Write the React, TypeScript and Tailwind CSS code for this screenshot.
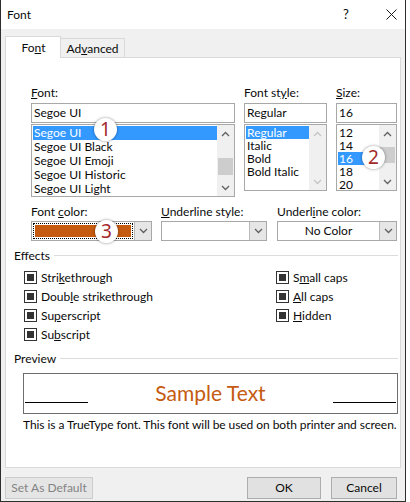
import React from "react";

const ORANGE = "#c55a11";

function Chev({ up, light }: { up?: boolean; light?: boolean }) {
  return (
    <svg width="9" height="6" viewBox="0 0 9 6" className="block">
      <polyline
        points={up ? "1,5 4.5,1.5 8,5" : "1,1 4.5,4.5 8,1"}
        fill="none"
        stroke={light ? "#c4c4c4" : "#606060"}
        strokeWidth="1.3"
      />
    </svg>
  );
}

function Scrollbar({ before, thumb, light }: { before: number; thumb: number; light?: boolean }) {
  return (
    <div className="flex h-full w-[17px] flex-col bg-[#f0f0f0]">
      <div className="flex h-[17px] items-center justify-center">
        <Chev up light={light} />
      </div>
      <div style={{ height: before }} />
      {thumb > 0 && <div className="mx-[1px] bg-[#cdcdcd]" style={{ height: thumb }} />}
      <div className="flex-1" />
      <div className="flex h-[17px] items-center justify-center">
        <Chev light={light} />
      </div>
    </div>
  );
}

function Badge({ n, className }: { n: string; className: string }) {
  return (
    <div
      className={`absolute flex h-[23px] w-[23px] items-center justify-center rounded-full bg-white font-['Noto_Sans',sans-serif] text-[19px] leading-none text-[#a3282b] shadow-[0_0_3px_rgba(0,0,0,0.45)] ${className}`}
    >
      <span className="-mt-[1px]">{n}</span>
    </div>
  );
}

function Label({ children }: { children: React.ReactNode }) {
  return <div className="h-[15px] leading-[15px] whitespace-nowrap">{children}</div>;
}

function DropArrow() {
  return (
    <div className="flex h-full w-[17px] items-center justify-center border-l border-[#b9b9b9] bg-[#e6e6e6]">
      <Chev />
    </div>
  );
}

function Check({ children }: { children: React.ReactNode }) {
  return (
    <div className="flex h-[19px] items-center whitespace-nowrap">
      <div className="flex h-[13px] w-[13px] items-center justify-center border border-[#333333] bg-white">
        <div className="h-[7px] w-[7px] bg-[#333333]" />
      </div>
      <span className="ml-[4px] leading-[15px]">{children}</span>
    </div>
  );
}

function SectionHead({ title }: { title: string }) {
  return (
    <div className="flex h-[15px] items-center pl-[8px] pr-[2px]">
      <span className="leading-[15px]">{title}</span>
      <div className="ml-[4px] h-px flex-1 bg-[#dcdcdc]" />
    </div>
  );
}

export default function App() {
  const fonts = ["Segoe UI", "Segoe UI Black", "Segoe UI Emoji", "Segoe UI Historic", "Segoe UI Light"];
  const styles = ["Regular", "Italic", "Bold", "Bold Italic"];
  const sizes = ["12", "14", "16", "18", "20"];

  return (
    <div className="h-[502px] w-[410px] bg-white font-['Segoe_UI','Lato',sans-serif] text-[12px] text-[#0a0a0a]">
      <div className="flex h-[502px] w-[406px] flex-col border-x border-b border-[#2e2e2e]">
        {/* title bar */}
        <div className="flex h-[29px] items-center bg-white pl-[6px]">
          <span className="text-[12px]">Font</span>
          <span className="ml-auto w-[12px] text-center text-[13px]">?</span>
          <svg width="11" height="11" viewBox="0 0 11 11" className="ml-[34px] mr-[8px]">
            <path d="M0.5 0.5 L10.5 10.5 M10.5 0.5 L0.5 10.5" stroke="#1a1a1a" strokeWidth="1" />
          </svg>
        </div>

        <div className="flex flex-1 flex-col bg-[#f0f0f0] px-[4px]">
          {/* tabs */}
          <div className="mt-[7px] flex h-[21px] items-end">
            <div className="relative z-10 -mb-px flex h-[22px] w-[56px] items-start justify-center border border-b-0 border-[#d9d9d9] bg-white pt-[3px] pl-[1px]">
              <span className="leading-[15px]">
                Fo<u>n</u>t
              </span>
            </div>
            <div className="flex h-[19px] w-[64px] items-center justify-center border border-l-0 border-b-0 border-[#d9d9d9] bg-[#f0f0f0]">
              <span className="leading-[15px]">
                Ad<u>v</u>anced
              </span>
            </div>
          </div>

          {/* panel */}
          <div className="h-[411px] border border-[#d9d9d9] bg-white">
            {/* font / style / size */}
            <div className="flex pl-[25px] pt-[27px]">
              <div className="relative flex w-[204px] flex-col">
                <Label>
                  <u>F</u>ont:
                </Label>
                <div className="mt-[3px] flex h-[20px] items-center border border-[#a8a8a8] px-[2px]">Segoe UI</div>
                <div className="mt-[1px] flex h-[73px] border border-[#a8a8a8]">
                  <div className="flex flex-1 flex-col pl-[1px] pt-[1px]">
                    {fonts.map((f, i) => (
                      <div
                        key={f}
                        className={`flex h-[14px] items-center pl-[1px] leading-[14px] ${i === 0 ? "bg-[#3399ff] text-white" : ""}`}
                      >
                        {f}
                      </div>
                    ))}
                  </div>
                  <Scrollbar before={16} thumb={17} />
                </div>
                <Badge n="1" className="left-[63px] top-[33px]" />
              </div>

              <div className="ml-[9px] flex w-[83px] flex-col">
                <Label>
                  Font st<u>y</u>le:
                </Label>
                <div className="mt-[3px] flex h-[20px] items-center border border-[#a8a8a8] px-[2px]">Regular</div>
                <div className="mt-[1px] flex h-[67px] border border-[#a8a8a8]">
                  <div className="flex min-w-0 flex-1 flex-col pl-[1px] pt-[1px]">
                    {styles.map((f, i) => (
                      <div
                        key={f}
                        className={`flex h-[13px] items-center pl-[1px] leading-[13px] whitespace-nowrap ${i === 0 ? "bg-[#3399ff] text-white" : ""}`}
                      >
                        {f}
                      </div>
                    ))}
                  </div>
                  <Scrollbar before={0} thumb={0} light />
                </div>
              </div>

              <div className="relative ml-[9px] flex w-[61px] flex-col">
                <Label>
                  <u>S</u>ize:
                </Label>
                <div className="mt-[3px] flex h-[20px] items-center border border-[#a8a8a8] px-[2px]">16</div>
                <div className="mt-[1px] flex h-[67px] border border-[#a8a8a8]">
                  <div className="flex flex-1 flex-col pl-[1px] pt-[1px]">
                    {sizes.map((f, i) => (
                      <div
                        key={f}
                        className={`flex h-[13px] items-center pl-[1px] leading-[13px] ${i === 2 ? "bg-[#3399ff] text-white" : ""}`}
                      >
                        {f}
                      </div>
                    ))}
                  </div>
                  <Scrollbar before={5} thumb={16} />
                </div>
                <Badge n="2" className="left-[26px] top-[61px]" />
              </div>
            </div>

            {/* colour row */}
            <div className="mt-[7px] flex pl-[25px]">
              <div className="relative flex w-[121px] flex-col">
                <Label>
                  Font <u>c</u>olor:
                </Label>
                <div className="mt-[2px] flex h-[20px] border border-[#a8a8a8]">
                  <div className="flex flex-1 p-[1px]">
                    <div className="flex-1 border border-dotted border-black p-[1px]">
                      <div className="h-full w-full" style={{ background: ORANGE }} />
                    </div>
                  </div>
                  <DropArrow />
                </div>
                <Badge n="3" className="left-[64px] top-[16px]" />
              </div>
              <div className="ml-[9px] flex w-[106px] flex-col">
                <Label>
                  <u>U</u>nderline style:
                </Label>
                <div className="mt-[2px] flex h-[20px] border border-[#a8a8a8]">
                  <div className="flex-1" />
                  <DropArrow />
                </div>
              </div>
              <div className="ml-[10px] flex w-[120px] flex-col">
                <Label>
                  Underl<u>i</u>ne color:
                </Label>
                <div className="mt-[2px] flex h-[20px] border border-[#a8a8a8]">
                  <div className="flex flex-1 items-center justify-center">No Color</div>
                  <DropArrow />
                </div>
              </div>
            </div>

            {/* effects */}
            <div className="mt-[7px]">
              <SectionHead title="Effects" />
            </div>
            <div className="mt-[5px] flex pl-[18px]">
              <div className="flex w-[252px] flex-col">
                <Check>
                  Stri<u>k</u>ethrough
                </Check>
                <Check>
                  Doub<u>l</u>e strikethrough
                </Check>
                <Check>
                  Su<u>p</u>erscript
                </Check>
                <Check>
                  Su<u>b</u>script
                </Check>
              </div>
              <div className="flex flex-col">
                <Check>
                  S<u>m</u>all caps
                </Check>
                <Check>
                  <u>A</u>ll caps
                </Check>
                <Check>
                  <u>H</u>idden
                </Check>
              </div>
            </div>

            {/* preview */}
            <div className="mt-[7px]">
              <SectionHead title="Preview" />
            </div>
            <div className="ml-[17px] mr-[2px] mt-[7px] flex h-[41px] border border-[#6e6e6e] px-[1px]">
              <div className="mb-[10px] h-px w-[63px] self-end bg-black" />
              <div className="-mt-[2px] flex flex-1 items-center justify-center text-[21px] leading-none" style={{ color: ORANGE }}>
                Sample Text
              </div>
              <div className="mb-[10px] h-px w-[63px] self-end bg-black" />
            </div>
            <div className="ml-[17px] mt-[3px] whitespace-nowrap leading-[15px] tracking-[-0.07px]">
              This is a TrueType font. This font will be used on both printer and screen.
            </div>
          </div>

          {/* buttons */}
          <div className="mt-[9px] flex">
            <div className="flex h-[22px] w-[88px] items-center justify-center border border-[#cccccc] bg-[#e5e5e5] text-[#838383]">
              Set As Default
            </div>
            <div className="ml-auto flex h-[22px] w-[74px] items-center justify-center border border-[#adadad] bg-[#e1e1e1]">
              OK
            </div>
            <div className="ml-[10px] mr-[4px] flex h-[22px] w-[66px] items-center justify-center border border-[#adadad] bg-[#e1e1e1]">
              Cancel
            </div>
          </div>
        </div>
      </div>
    </div>
  );
}
